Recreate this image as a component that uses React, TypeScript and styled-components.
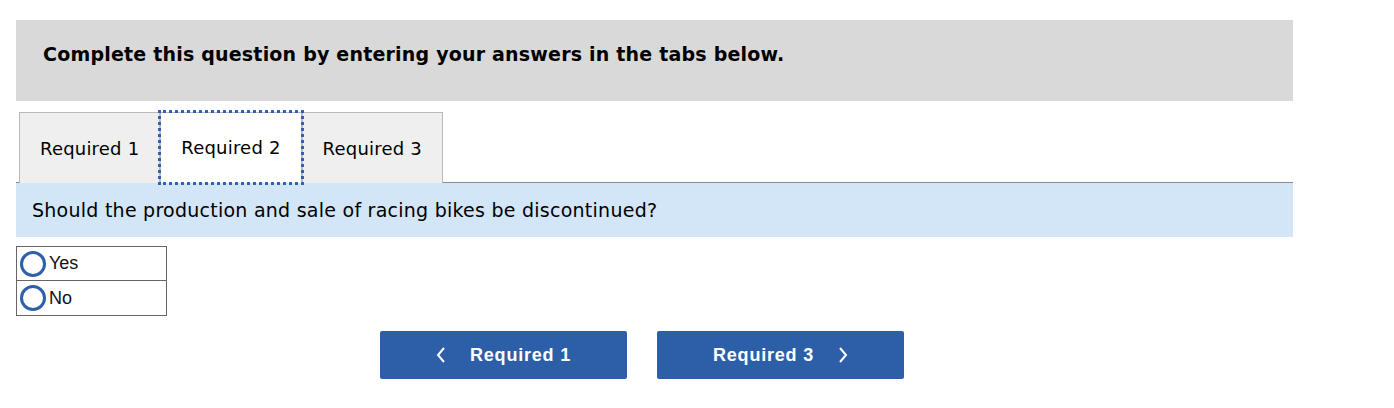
import React from "react";
import styled, { createGlobalStyle } from "styled-components";

const GlobalStyle = createGlobalStyle`
  body {
    margin: 0;
    background: #ffffff;
    font-family: "DejaVu Sans", Verdana, sans-serif;
    color: #000000;
  }
`;

const Page = styled.div`
  width: 1277px;
  padding: 20px 0 0 16px;
`;

const Instructions = styled.div`
  height: 81px;
  box-sizing: border-box;
  padding: 23px 27px 0;
  background: #d9d9d9;
  font-size: 19px;
  font-weight: bold;
  line-height: 23px;
  letter-spacing: 0.2px;
`;

const TabBar = styled.div`
  display: flex;
  margin-top: 11px;
  padding-left: 3px;
  border-bottom: 1px solid #8a8a8a;
`;

const Tab = styled.button<{ $active?: boolean }>`
  height: 71px;
  margin-bottom: -1px;
  padding: 0 20px;
  box-sizing: border-box;
  border: 1px solid #b9b9b9;
  border-bottom: ${(p) => (p.$active ? "1px solid #ffffff" : "none")};
  background: ${(p) => (p.$active ? "#ffffff" : "#efefef")};
  outline: ${(p) => (p.$active ? "3px dotted #2f62b5" : "none")};
  outline-offset: -1px;
  font-family: "DejaVu Sans", Verdana, sans-serif;
  font-size: 18px;
  letter-spacing: 0.2px;
  color: #000000;
  position: relative;
  z-index: ${(p) => (p.$active ? 1 : 0)};
`;

const Question = styled.div`
  height: 54px;
  display: flex;
  align-items: center;
  padding-left: 16px;
  background: #d3e6f7;
  font-size: 19px;
  letter-spacing: 0.25px;
`;

const Options = styled.div`
  width: 151px;
  box-sizing: border-box;
  margin-top: 9px;
  border: 1px solid #666666;
  font-family: "Liberation Sans", Arial, sans-serif;
`;

const Option = styled.label<{ $first?: boolean }>`
  display: flex;
  align-items: center;
  gap: 3px;
  height: ${(p) => (p.$first ? "33px" : "34px")};
  padding-left: 3px;
  border-top: ${(p) => (p.$first ? "none" : "1px solid #666666")};
  font-size: 18px;
  color: #111111;
`;

const Radio = styled.span`
  width: 26px;
  height: 26px;
  box-sizing: border-box;
  border: 3px solid #2f60ab;
  border-radius: 50%;
`;

const Nav = styled.div`
  display: flex;
  gap: 30px;
  margin-top: 15px;
  padding-left: 364px;
`;

const NavButton = styled.button`
  width: 247px;
  height: 48px;
  display: flex;
  align-items: center;
  justify-content: center;
  gap: 24px;
  border: none;
  border-radius: 2px;
  background: #2d5fa9;
  color: #ffffff;
  font-family: "Liberation Sans", Arial, sans-serif;
  font-weight: bold;
  font-size: 18px;
  letter-spacing: 0.8px;
`;

const Chevron = ({ dir }: { dir: "left" | "right" }) => (
  <svg width="10" height="16" viewBox="0 0 10 16">
    <path
      d={dir === "left" ? "M8 1 L2 8 L8 15" : "M2 1 L8 8 L2 15"}
      fill="none"
      stroke="#ffffff"
      strokeWidth="2"
    />
  </svg>
);

const tabs = ["Required 1", "Required 2", "Required 3"];

export default function App() {
  return (
    <>
      <GlobalStyle />
      <Page>
        <Instructions>
          Complete this question by entering your answers in the tabs below.
        </Instructions>
        <TabBar>
          {tabs.map((t) => (
            <Tab key={t} $active={t === "Required 2"}>
              {t}
            </Tab>
          ))}
        </TabBar>
        <Question>
          Should the production and sale of racing bikes be discontinued?
        </Question>
        <Options>
          <Option $first>
            <Radio />
            Yes
          </Option>
          <Option>
            <Radio />
            No
          </Option>
        </Options>
        <Nav>
          <NavButton>
            <Chevron dir="left" />
            Required 1
          </NavButton>
          <NavButton>
            Required 3
            <Chevron dir="right" />
          </NavButton>
        </Nav>
      </Page>
    </>
  );
}
